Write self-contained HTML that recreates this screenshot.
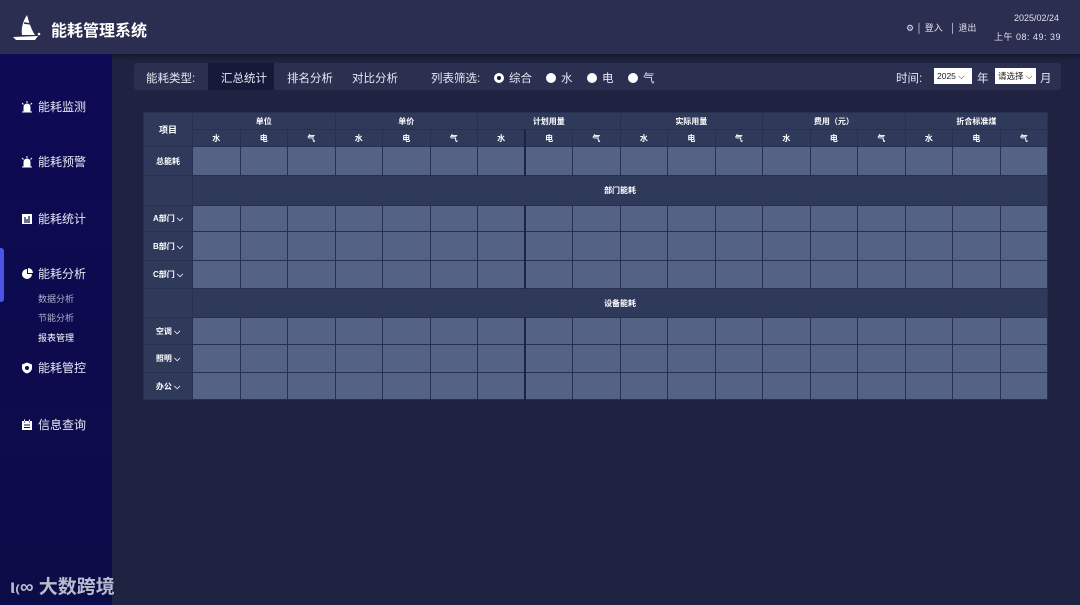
<!DOCTYPE html>
<html><head><meta charset="utf-8"><style>
*{margin:0;padding:0;box-sizing:border-box}
body{width:1080px;height:605px;overflow:hidden;background:#1f2240;font-family:"Liberation Sans","Noto Sans CJK SC",sans-serif;position:relative;color:#fff}
.hdr{position:absolute;left:0;top:0;width:1080px;height:54px;background:#2b2e50;box-shadow:0 2px 4px rgba(0,0,0,.4)}
.side{position:absolute;left:0;top:54px;width:112px;height:551px;background:linear-gradient(#0e0a55,#0c0c48)}
.nav{position:absolute;left:21px;font-size:12px;color:#e8e8f4;height:14px;line-height:14px}
.nav svg{position:absolute;left:0;top:1px}
.nav b{font-weight:normal;position:absolute;left:17px;white-space:nowrap}
.sub{position:absolute;left:38px;font-size:9px;color:#b0b0cc}
.bar{position:absolute;left:134px;top:63px;width:927px;height:27px;background:#2b2f50;border-radius:3px;font-size:11.5px;color:#e6e8f2}
.bar span{position:absolute;top:7px}
.rad{display:inline-block;width:10px;height:10px;border-radius:50%;background:#fff;vertical-align:-1px;margin-right:5px}
table{position:absolute;left:143px;top:112px;border-collapse:collapse;table-layout:fixed;width:904px}
td{border:1px solid #27304f;font-size:8px;text-align:center;color:#fff;font-weight:bold}
.h{background:#2f3a5b}
.d{background:#536285}
.sel{display:inline-block;background:#fff;color:#222;font-size:8.5px;height:16px;line-height:16px;padding:0 3px;position:absolute;top:5px}
</style></head><body>
<div class="hdr">
<svg style="position:absolute;left:12px;top:14px" width="30" height="28" viewBox="0 0 30 28"><path d="M15 1 C11 7 9 14 10 21 L23 21 C19 15 17 8 15 1Z" fill="#fff"/><path d="M1 23 L26 22 L23 26 L4 26Z" fill="#fff"/><path d="M12 9 L19 10" stroke="#2b2e50" stroke-width="1.5"/><circle cx="27" cy="20" r="1.3" fill="#fff"/></svg>
<div style="position:absolute;left:51px;top:17px;font-size:16px;font-weight:bold">能耗管理系统</div>
<div style="position:absolute;left:906px;top:21px;font-size:9px;color:#e0e0ee">⚙ │ 登入 &nbsp; │ 退出</div>
<div style="position:absolute;left:1014px;top:13px;font-size:9px;color:#e0e0ee">2025/02/24</div>
<div style="position:absolute;left:994px;top:30px;font-size:9px;color:#e0e0ee;letter-spacing:.5px">上午 08: 49: 39</div>
</div>
<div class="side">
<div style="position:absolute;left:0;top:194px;width:4px;height:54px;background:#4a55e8;border-radius:0 3px 3px 0"></div>
</div>
<div class="nav" style="top:100px"><svg width="12" height="12" viewBox="0 0 12 12"><path d="M3 10 V6 a3 3 0 0 1 6 0 V10Z M1 11h10 M6 0v2 M1 2l1.5 1.5 M11 2l-1.5 1.5" fill="#fff" stroke="#fff"/></svg><b>能耗监测</b></div>
<div class="nav" style="top:155px"><svg width="12" height="12" viewBox="0 0 12 12"><path d="M3 10 V6 a3 3 0 0 1 6 0 V10Z M1 11h10 M6 0v2 M1 2l1.5 1.5 M11 2l-1.5 1.5" fill="#fff" stroke="#fff"/></svg><b>能耗预警</b></div>
<div class="nav" style="top:212px"><svg width="12" height="12" viewBox="0 0 12 12"><rect x="1" y="1" width="10" height="10" fill="#fff"/><path d="M4 4v6 M6 6v4 M8 3v7" stroke="#0e0a55" stroke-width="1.2"/></svg><b>能耗统计</b></div>
<div class="nav" style="top:267px"><svg width="12" height="12" viewBox="0 0 12 12"><path d="M6 1 A5 5 0 1 0 11 6 H6Z" fill="#fff"/><path d="M7 0 A5 5 0 0 1 12 5 H7Z" fill="#fff"/></svg><b>能耗分析</b></div>
<div class="sub" style="top:292px">数据分析</div>
<div class="sub" style="top:311px">节能分析</div>
<div class="sub" style="top:331px;color:#fff">报表管理</div>
<div class="nav" style="top:361px"><svg width="12" height="12" viewBox="0 0 12 12"><path d="M6 0.5 L11 2.5 V6 C11 9 8 11 6 11.5 C4 11 1 9 1 6 V2.5Z" fill="#fff"/><circle cx="6" cy="6" r="2" fill="#0e0a55"/></svg><b>能耗管控</b></div>
<div class="nav" style="top:418px"><svg width="12" height="12" viewBox="0 0 12 12"><rect x="1" y="2" width="10" height="9" fill="#fff"/><path d="M3.5 0.5v3 M8.5 0.5v3 M3 6h6 M3 8.5h6" stroke="#0e0a55" stroke-width="1"/><path d="M3.5 0.5v2 M8.5 0.5v2" stroke="#fff"/></svg><b>信息查询</b></div>
<div style="position:absolute;left:10px;top:572px;font-size:19px;font-weight:bold;color:#b8bccc">ι₍∞ 大数跨境</div>
<div class="bar">
<div style="position:absolute;left:74px;top:0;width:66px;height:27px;background:#161a3a"></div>
<span style="left:12px">能耗类型:</span><span style="left:87px">汇总统计</span><span style="left:153px">排名分析</span><span style="left:218px">对比分析</span>
<span style="left:297px">列表筛选:</span>
<span style="left:360px"><i class="rad" style="border:3px solid #fff;background:#1a1d3a"></i>综合</span>
<span style="left:412px"><i class="rad"></i>水</span>
<span style="left:453px"><i class="rad"></i>电</span>
<span style="left:494px"><i class="rad"></i>气</span>
<span style="left:762px">时间:</span>
<div class="sel" style="left:800px;width:38px">2025 ⌵</div><span style="left:843px">年</span>
<div class="sel" style="left:861px;width:41px">请选择 ⌵</div><span style="left:906px">月</span>
</div>
<table>
<colgroup><col style="width:49px"><col span="18" style="width:47.5px"></colgroup>
<tr style="height:17px"><td class="h" rowspan="2" style="font-size:9px">项目</td><td class="h" colspan="3">单位</td><td class="h" colspan="3">单价</td><td class="h" colspan="3">计划用量</td><td class="h" colspan="3">实际用量</td><td class="h" colspan="3">费用（元）</td><td class="h" colspan="3">折合标准煤</td></tr>
<tr style="height:17px"><td class="h">水</td><td class="h">电</td><td class="h">气</td><td class="h">水</td><td class="h">电</td><td class="h">气</td><td class="h">水</td><td class="h" style="border-left:2px solid #1d2440">电</td><td class="h">气</td><td class="h">水</td><td class="h">电</td><td class="h">气</td><td class="h">水</td><td class="h">电</td><td class="h">气</td><td class="h">水</td><td class="h">电</td><td class="h">气</td></tr>
<tr style="height:29px" class="r"><td class="h">总能耗</td></tr>
<tr style="height:30px"><td class="h"></td><td class="h" colspan="18">部门能耗</td></tr>
<tr style="height:26px" class="r"><td class="h">A部门 ⌵</td></tr>
<tr style="height:29px" class="r"><td class="h">B部门 ⌵</td></tr>
<tr style="height:28px" class="r"><td class="h">C部门 ⌵</td></tr>
<tr style="height:29px"><td class="h"></td><td class="h" colspan="18">设备能耗</td></tr>
<tr style="height:27px" class="r"><td class="h">空调 ⌵</td></tr>
<tr style="height:28px" class="r"><td class="h">照明 ⌵</td></tr>
<tr style="height:27px" class="r"><td class="h">办公 ⌵</td></tr>
</table>
<script>
document.querySelectorAll('tr.r').forEach(function(tr){for(var i=0;i<18;i++){var td=document.createElement('td');td.className='d';if(i==7)td.style.borderLeft='2px solid #1d2440';tr.appendChild(td);}});
</script>
</body></html>
